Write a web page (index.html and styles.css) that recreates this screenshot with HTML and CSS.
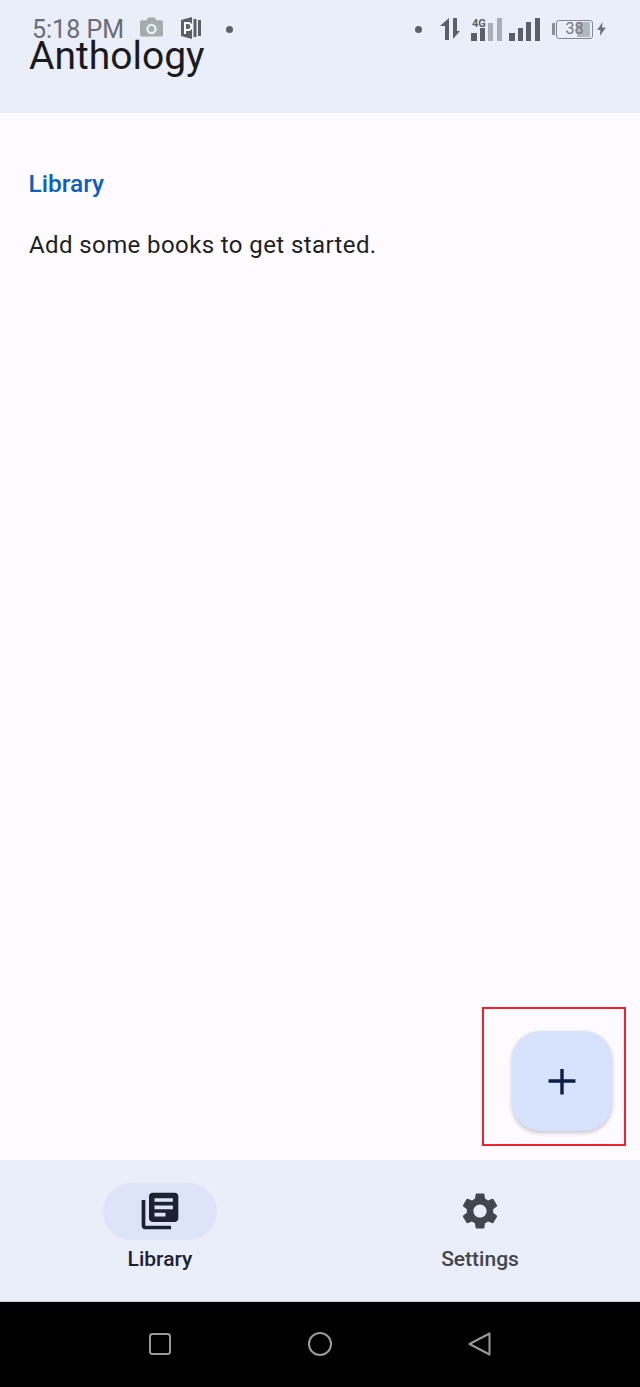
FILE: index.html
```html
<!DOCTYPE html>
<html lang="en">
<head>
<meta charset="utf-8">
<title>Anthology</title>
<link rel="stylesheet" href="styles.css">
</head>
<body>
<div class="screen">
  <div class="status">
    <span class="time">5:18 PM</span>
    <svg class="st-cam" viewBox="0 0 24 20"><path fill="#a3adad" fill-rule="evenodd" d="M2 3h5l1.500-3h7L17 3h5a2 2 0 0 1 2 2v13a2 2 0 0 1-2 2H2a2 2 0 0 1-2-2V5a2 2 0 0 1 2-2zm10 3.500a5.500 5.500 0 1 0 0 11 5.500 5.500 0 0 0 0-11zm0 2.500a3 3 0 1 1 0 6 3 3 0 0 1 0-6z"/></svg>
    <svg class="st-p" viewBox="0 0 22 22"><path fill="#5c6066" d="M1 3l11-3v22L1 19z"/><path fill="#5c6066" d="M13.500 2h3v18h-3zM18 3h3v16h-3z"/><path fill="none" stroke="#fff" stroke-width="2" d="M5 17V6h3a3 3 0 0 1 0 7H5"/></svg>
    <span class="dot dot-left"></span>
    <span class="status-gap"></span>
    <span class="dot"></span>
    <svg class="st-arrows" viewBox="0 0 21 22"><path fill="#5c6066" d="M10 0v22H6V8H1zM14 0h4v13h3l-7 8z"/></svg>
    <svg class="st-net" viewBox="0 0 31 23"><text x="1" y="9" class="net-label">4G</text><path fill="#5c6066" d="M0 15h6v8H0zM9 10h5v13H9z"/><path fill="#a9aeb6" d="M17 5h5v18h-5zM26 0h5v23h-5z"/></svg>
    <svg class="st-sig" viewBox="0 0 31 23"><path fill="#5c6066" d="M0 15h6v8H0zM9 10h5v13H9zM17 4h5v19h-5zM26 0h5v23h-5z"/></svg>
    <span class="battery"><span class="bat-cap"></span><span class="bat-body"><span class="bat-fill"></span><span class="bat-num">38</span></span></span>
    <svg class="st-bolt" viewBox="0 0 8 13"><path fill="#6b7078" d="M5 0L0 7.500h3L2.500 13 8 5H4.500z"/></svg>
  </div>

  <header class="app-bar"><h1 class="app-title">Anthology</h1></header>

  <main class="content">
    <h2 class="section-title">Library</h2>
    <p class="empty">Add some books to get started.</p>
  </main>

  <button class="fab" aria-label="Add book">
    <svg viewBox="0 0 24 24" class="fab-icon"><path fill="#0c1e46" d="M13.200 3.500v7.300h8.300v2.400h-8.300v8.300h-2.400v-8.300H2.500v-2.400h8.300V3.500z"/></svg>
  </button>
  <div class="highlight"></div>

  <nav class="nav">
    <div class="nav-item">
      <span class="pill pill-active">
        <svg class="nav-icon" viewBox="0 0 24 24"><path fill="#1c2233" d="M4 6H2v14c0 1.100.9 2 2 2h14v-2H4V6zm16-4H8c-1.100 0-2 .9-2 2v12c0 1.100.9 2 2 2h12c1.100 0 2-.9 2-2V4c0-1.100-.9-2-2-2zm-1 9H9V9h10v2zm-4 4H9v-2h6v2zm4-8H9V5h10v2z"/></svg>
      </span>
      <span class="nav-label nav-label-active">Library</span>
    </div>
    <div class="nav-item">
      <span class="pill">
        <svg class="nav-icon" viewBox="0 0 24 24"><path fill="#42464f" d="M19.140 12.940c.04-.3.060-.61.060-.94 0-.32-.02-.64-.07-.94l2.030-1.580a.49.49 0 0 0 .12-.61l-1.920-3.320a.488.488 0 0 0-.59-.22l-2.390.96c-.5-.38-1.030-.7-1.620-.94l-.36-2.540a.484.484 0 0 0-.48-.41h-3.840c-.24 0-.43.170-.47.410l-.36 2.540c-.59.240-1.130.570-1.620.94l-2.390-.96c-.22-.08-.47 0-.59.220L2.740 8.870c-.12.210-.08.470.12.610l2.030 1.580c-.05.3-.09.630-.09.940s.02.640.07.940l-2.030 1.580a.49.49 0 0 0-.12.610l1.920 3.320c.12.220.37.290.59.220l2.390-.96c.5.380 1.030.7 1.620.94l.36 2.540c.05.240.24.410.48.410h3.840c.24 0 .44-.17.470-.41l.36-2.540c.59-.24 1.130-.56 1.620-.94l2.390.96c.22.080.47 0 .59-.22l1.920-3.320c.12-.22.070-.47-.12-.61l-2.010-1.580zM12 15.600A3.610 3.610 0 0 1 8.400 12c0-1.980 1.620-3.600 3.600-3.600s3.600 1.620 3.600 3.600-1.620 3.600-3.600 3.600z"/></svg>
      </span>
      <span class="nav-label">Settings</span>
    </div>
  </nav>

  <div class="system-nav">
    <svg class="sys-icon" viewBox="0 0 24 24"><rect x="2" y="2" width="20" height="20" rx="2.500" fill="none" stroke="#9a9a9a" stroke-width="2"/></svg>
    <svg class="sys-icon" viewBox="0 0 24 24"><circle cx="12" cy="12" r="11" fill="none" stroke="#9a9a9a" stroke-width="2"/></svg>
    <svg class="sys-icon" viewBox="0 0 24 24"><path d="M1.500 12L21.500 1.500v21z" fill="none" stroke="#9a9a9a" stroke-width="2" stroke-linejoin="round"/></svg>
  </div>
</div>
</body>
</html>
```
FILE: styles.css
```css
* { box-sizing: border-box; }
html, body { margin: 0; padding: 0; }
body { font-family: Roboto, "Liberation Sans", sans-serif; background: #000; }

.screen {
  position: relative;
  width: 640px;
  height: 1387px;
  display: flex;
  flex-direction: column;
  overflow: hidden;
  background: #fdfbff;
}

/* status bar floats over the app bar */
.status {
  position: absolute;
  top: 15px;
  left: 32px;
  right: 34px;
  height: 28px;
  display: flex;
  align-items: center;
  color: #5f6368;
}
.time { font-size: 25px; line-height: 28px; color: #696d73; width: 92px; white-space: nowrap; margin-top: 2px; }
.st-cam { width: 23px; height: 20px; margin-left: 16px; margin-top: -4px; }
.st-p { width: 22px; height: 22px; margin-left: 17px; margin-top: -2px; }
.dot { width: 7px; height: 7px; border-radius: 50%; background: #5f6368; flex: none; }
.dot-left { margin-left: 24px; }
.status-gap { flex: 1; }
.st-arrows { width: 21px; height: 22px; margin-left: 17px; }
.st-net { width: 31px; height: 23px; margin-left: 11px; overflow: visible; }
.net-label { font-family: Roboto, sans-serif; font-size: 11px; font-weight: 700; fill: #5c6066; }
.st-sig { width: 31px; height: 23px; margin-left: 7px; }
.battery { display: flex; align-items: center; margin-left: 12px; }
.bat-cap { width: 3px; height: 12px; background: #8a8f96; border-radius: 1px 0 0 1px; margin-right: 1px; }
.bat-body { position: relative; width: 37px; height: 19px; border: 1.500px solid #85898f; border-radius: 3px; display: flex; align-items: center; justify-content: center; }
.bat-fill { position: absolute; top: 1px; bottom: 1px; left: 1px; width: 32px; background: linear-gradient(90deg, #e9eef9 0 60%, #b3b7be 60%); border-radius: 1px; }
.bat-num { position: relative; font-size: 16px; line-height: 18px; color: #72767c; }
.st-bolt { width: 9px; height: 14px; margin-left: 4px; }

.app-bar {
  flex: none;
  height: 113px;
  background: #e9eef9;
  padding: 36px 29px 0;
}
.app-title { margin: 0; font-size: 39px; font-weight: 400; line-height: 40px; color: #1b1b1f; }

.content { flex: 1; padding: 0 29px; }
.section-title { margin: 56px 0 0 -0.5px; font-size: 24.500px; font-weight: 500; line-height: 30px; color: #0b60bd; }
.empty { margin: 31px 0 0; font-size: 24px; line-height: 30px; color: #1f1f23; letter-spacing: 0.4px; }

.fab {
  position: absolute;
  left: 512px;
  top: 1031px;
  width: 100px;
  height: 100px;
  border: 0;
  border-radius: 28px;
  background: #d7e2fc;
  box-shadow: 0 2px 4px rgba(0,0,0,.22);
  display: flex;
  align-items: center;
  justify-content: center;
  padding: 0;
}
.fab-icon { width: 34px; height: 34px; }
.highlight {
  position: absolute;
  left: 482px;
  top: 1007px;
  width: 144px;
  height: 139px;
  border: 2px solid #f0232b;
}

.nav {
  flex: none;
  height: 142px;
  background: #e9eef9;
  display: grid;
  grid-template-columns: 1fr 1fr;
  border-bottom: 1px solid #c6cad4;
}
.nav-item { display: flex; flex-direction: column; align-items: center; padding-top: 23px; }
.pill { width: 114px; height: 57px; border-radius: 29px; display: flex; align-items: center; justify-content: center; }
.pill-active { background: #dde4fa; }
.nav-icon { width: 44px; height: 44px; margin-bottom: 2px; }
.nav-label { margin-top: 5px; font-size: 21px; line-height: 28px; font-weight: 500; color: #42464f; }
.nav-label-active { color: #1c2233; }

.system-nav {
  flex: none;
  height: 85px;
  background: #000;
  display: flex;
  justify-content: center;
  gap: 136px;
  align-items: center;
  padding-bottom: 1px;
}
.sys-icon { width: 24px; height: 24px; }
```
